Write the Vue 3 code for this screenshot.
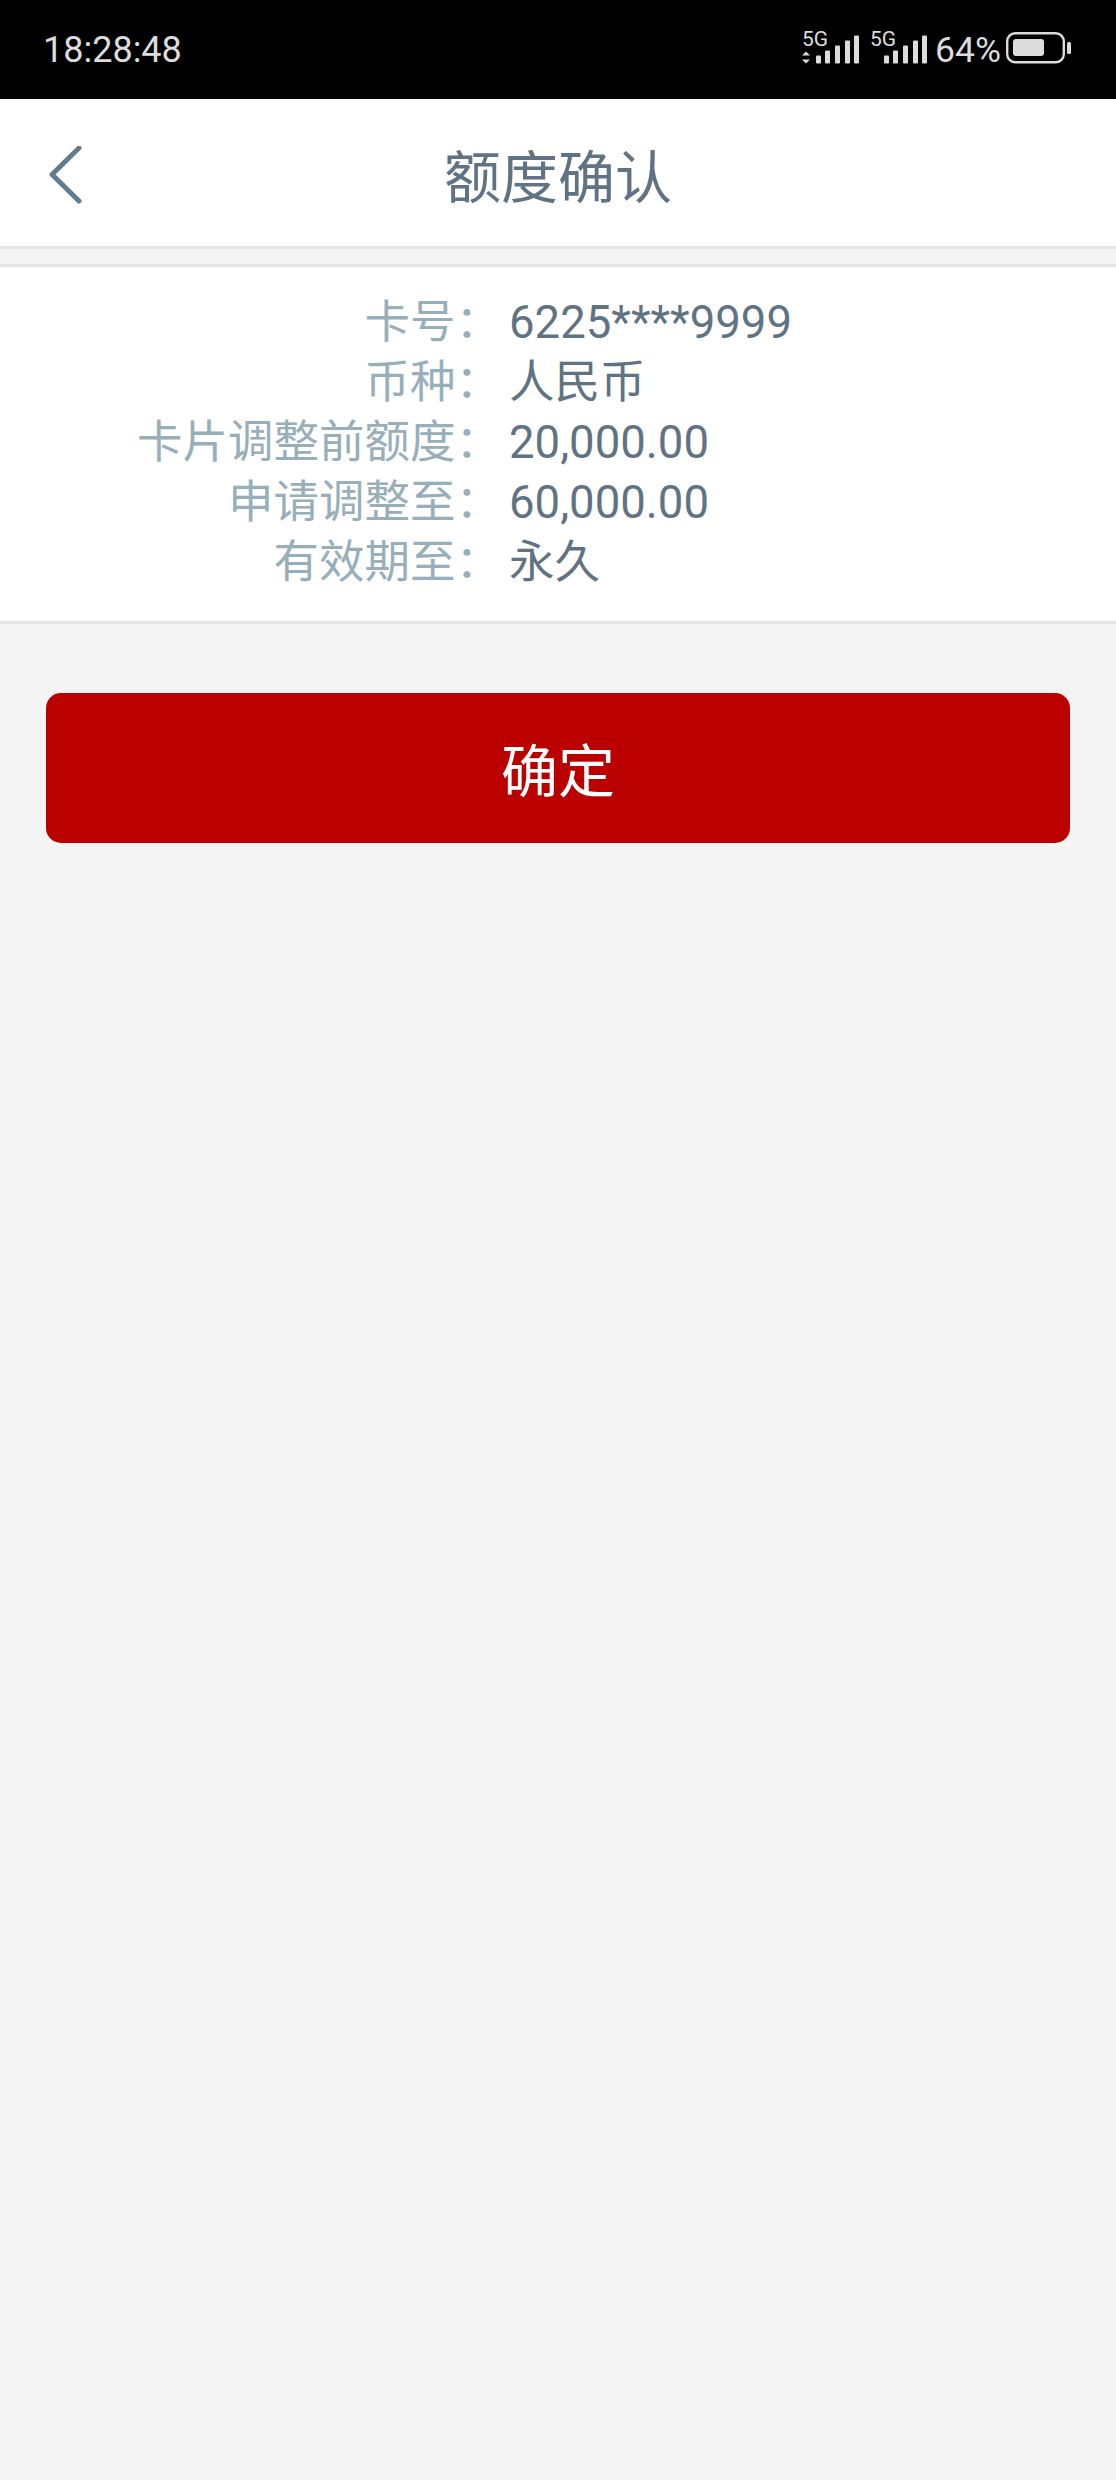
<script setup>
const rows = [
  { label: '卡号', value: '6225****9999' },
  { label: '币种', value: '人民币' },
  { label: '卡片调整前额度', value: '20,000.00' },
  { label: '申请调整至', value: '60,000.00' },
  { label: '有效期至', value: '永久' }
]

const bars = [
  { x: 14, h: 8 },
  { x: 23, h: 13 },
  { x: 33, h: 18 },
  { x: 43, h: 23 },
  { x: 52, h: 28 }
]
</script>

<template>
  <div class="page">
    <div class="status-bar">
      <span class="time">18:28:48</span>
      <div class="status-icons">
        <svg class="signal" width="60" height="44" viewBox="0 -4 60 44">
          <text x="0" y="16" class="net-text">5G</text>
          <path d="M4 21.5 L8 25.5 H0 Z M4 33.5 L0 29.5 H8 Z" fill="#dcdcdc" />
          <rect v-for="b in bars" :key="b.x" :x="b.x" :y="33.5 - b.h" width="5" :height="b.h" rx="1" fill="#dcdcdc" />
        </svg>
        <svg class="signal second" width="60" height="44" viewBox="0 -4 60 44">
          <text x="0" y="16" class="net-text">5G</text>
          <rect v-for="b in bars" :key="b.x" :x="b.x" :y="33.5 - b.h" width="5" :height="b.h" rx="1" fill="#dcdcdc" />
        </svg>
        <span class="percent">64%</span>
        <svg class="battery" width="65" height="32" viewBox="0 0 65 32">
          <rect x="1.2" y="1.2" width="56.6" height="29" rx="8" fill="none" stroke="#dcdcdc" stroke-width="2.4" />
          <rect x="7" y="7" width="31" height="17" rx="3" fill="#dcdcdc" />
          <rect x="61" y="10" width="4" height="12" rx="1.5" fill="#dcdcdc" />
        </svg>
      </div>
    </div>

    <header class="nav-bar">
      <svg class="back-icon" width="34" height="58" viewBox="0 0 34 58">
        <path d="M31 2 L4 28.5 L31 55" fill="none" stroke="#647b8b" stroke-width="5" stroke-linecap="round" stroke-linejoin="round" />
      </svg>
      <h1 class="title">额度确认</h1>
    </header>

    <section class="info-card">
      <div v-for="row in rows" :key="row.label" class="info-row">
        <span class="info-label">{{ row.label }}：</span>
        <span class="info-value">{{ row.value }}</span>
      </div>
    </section>

    <div class="actions">
      <button class="confirm-btn">确定</button>
    </div>
  </div>
</template>

<style>
html,
body {
  margin: 0;
  background: #f4f4f4;
}
</style>

<style scoped>
.page {
  width: 1116px;
  height: 2480px;
  background: #f4f4f4;
  font-family: Roboto, "Noto Sans CJK SC", sans-serif;
  overflow: hidden;
}

.status-bar {
  height: 99px;
  background: #000;
  color: #dcdcdc;
  display: flex;
  align-items: center;
  justify-content: space-between;
  padding: 0 45px 0 43px;
  box-sizing: border-box;
}
.time {
  font-size: 36px;
  line-height: 1;
}
.status-icons {
  display: flex;
  align-items: center;
  padding-bottom: 3px;
}
.signal {
  display: block;
}
.second {
  margin-left: 8px;
}
.percent {
  font-size: 35.5px;
  line-height: 1;
  margin: 5px 0 0 5px;
}
.battery {
  display: block;
  margin-left: 5px;
}
.net-text {
  font-family: Roboto, sans-serif;
  font-size: 21px;
  fill: #dcdcdc;
}

.nav-bar {
  height: 150px;
  box-sizing: border-box;
  background: #fff;
  border-bottom: 3px solid #e6e6e6;
  display: grid;
  grid-template-columns: 1fr auto 1fr;
  align-items: center;
}
.back-icon {
  margin: 5px 0 0 48px;
}
.title {
  grid-column: 2;
  margin: 0;
  font-size: 57px;
  font-weight: 400;
  color: #607384;
}

.info-card {
  margin-top: 15px;
  background: #fff;
  border-top: 3px solid #e6e6e6;
  border-bottom: 3px solid #e6e6e6;
  padding: 26px 0 28px;
}
.info-row {
  display: flex;
  height: 60px;
  line-height: 60px;
  font-size: 45.5px;
}
.info-label {
  width: 501px;
  text-align: right;
  color: #97afba;
  white-space: nowrap;
}
.info-value {
  margin-left: 8px;
  color: #607384;
}

.actions {
  padding: 69px 46px 0;
}
.confirm-btn {
  display: block;
  width: 100%;
  height: 150px;
  border: none;
  border-radius: 15px;
  background: #bb0000;
  color: #fff;
  font-family: inherit;
  font-size: 57px;
  padding: 0 0 3px;
}
</style>
